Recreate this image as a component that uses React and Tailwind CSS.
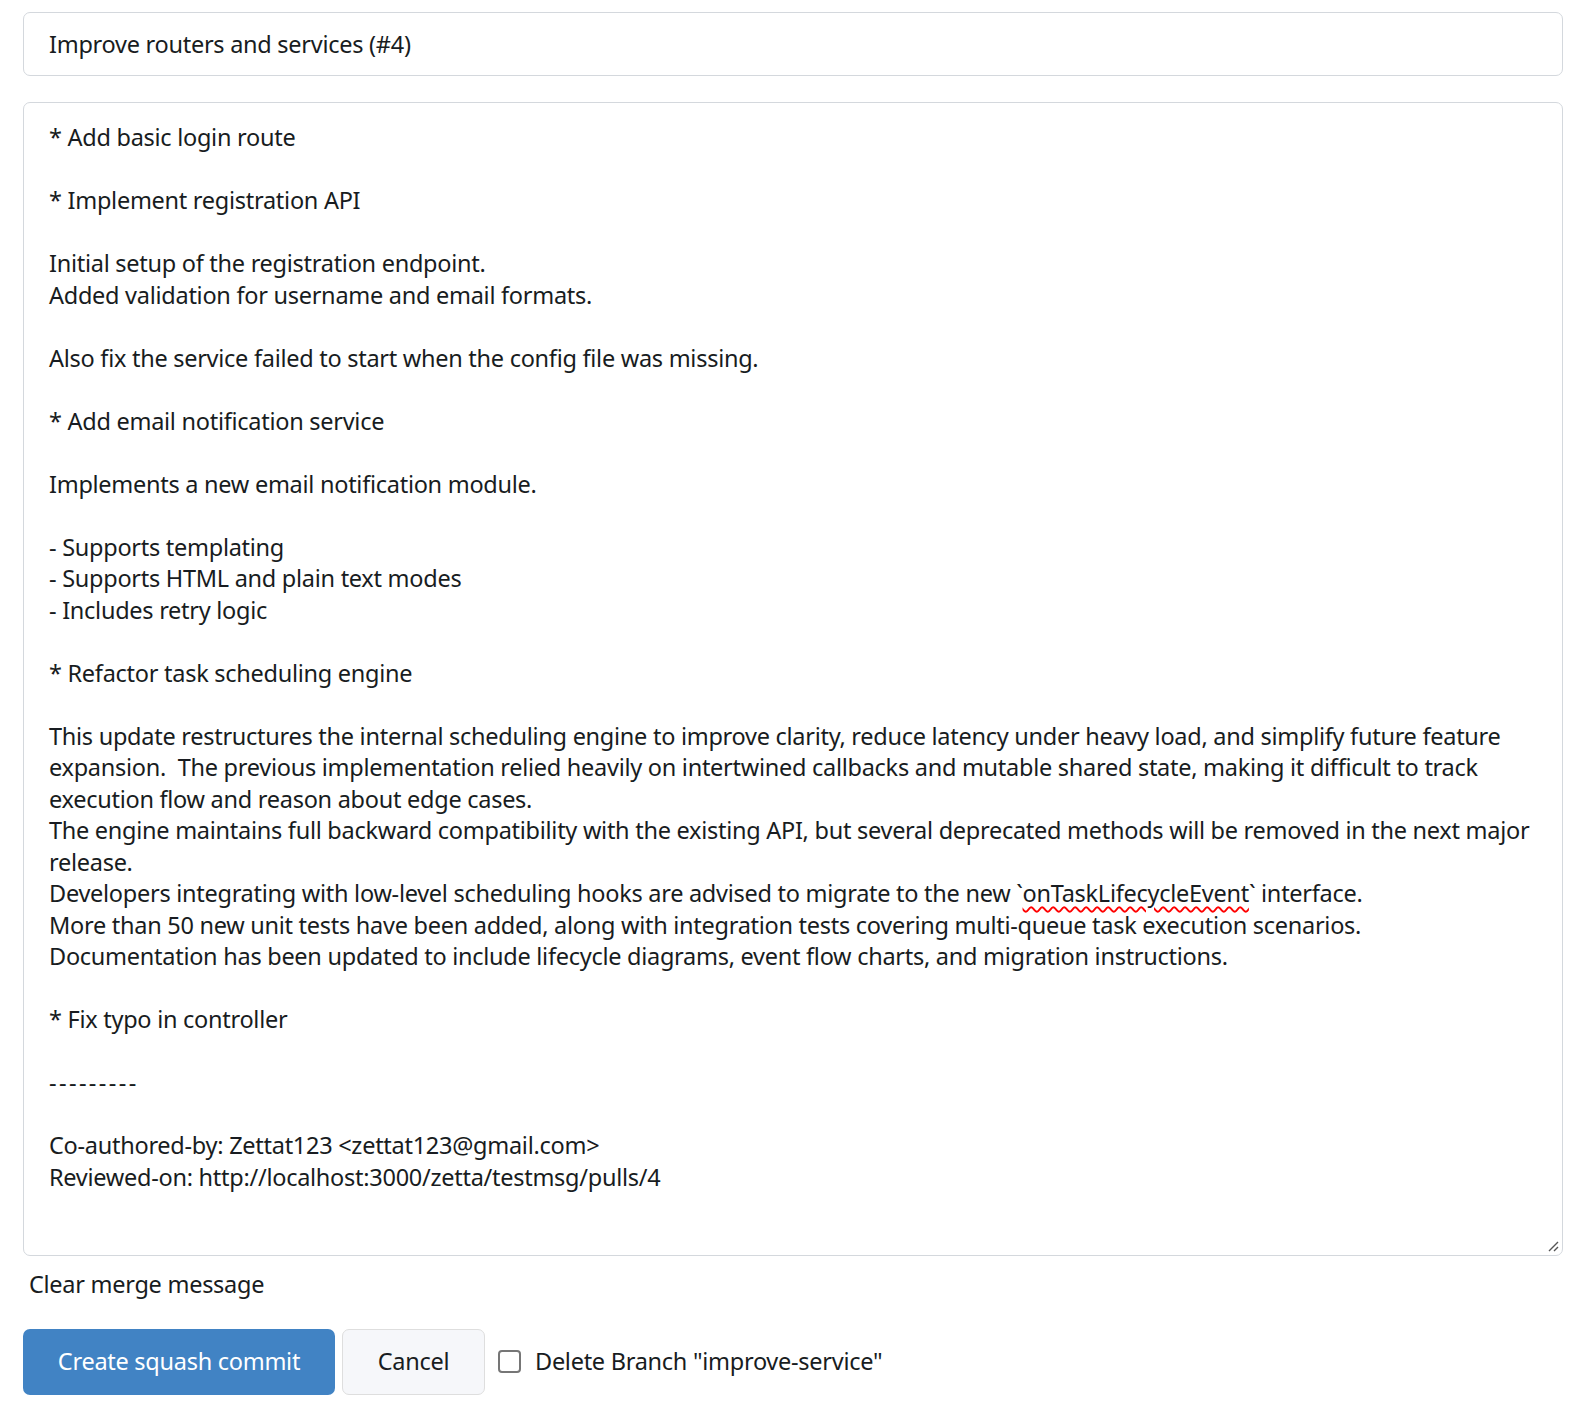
import React, { useState } from "react";

const lines = [
  "* Add basic login route",
  "",
  "* Implement registration API",
  "",
  "Initial setup of the registration endpoint.",
  "Added validation for username and email formats.",
  "",
  "Also fix the service failed to start when the config file was missing.",
  "",
  "* Add email notification service",
  "",
  "Implements a new email notification module.",
  "",
  "- Supports templating",
  "- Supports HTML and plain text modes",
  "- Includes retry logic",
  "",
  "* Refactor task scheduling engine",
  "",
  "This update restructures the internal scheduling engine to improve clarity, reduce latency under heavy load, and simplify future feature",
  "expansion.  The previous implementation relied heavily on intertwined callbacks and mutable shared state, making it difficult to track",
  "execution flow and reason about edge cases.",
  "The engine maintains full backward compatibility with the existing API, but several deprecated methods will be removed in the next major",
  "release.",
  "DEVELOPERS",
  "More than 50 new unit tests have been added, along with integration tests covering multi-queue task execution scenarios.",
  "Documentation has been updated to include lifecycle diagrams, event flow charts, and migration instructions.",
  "",
  "* Fix typo in controller",
  "",
  "DASHES",
  "",
  "Co-authored-by: Zettat123 <zettat123@gmail.com>",
  "Reviewed-on: http://localhost:3000/zetta/testmsg/pulls/4",
];

const renderLine = (line, index) => {
  if (line === "") {
    return <div key={index} className="h-[31.5px]" />;
  }
  if (line === "DEVELOPERS") {
    return (
      <div key={index} className="whitespace-pre">
        Developers integrating with low-level scheduling hooks are advised to
        migrate to the new `
        <span className="underline decoration-wavy decoration-[#ff0000] decoration-[1.5px] underline-offset-[4px]">
          onTaskLifecycleEvent
        </span>
        ` interface.
      </div>
    );
  }
  if (line === "DASHES") {
    return (
      <div key={index} className="whitespace-pre tracking-[2.4px]">
        ---------
      </div>
    );
  }
  return (
    <div key={index} className="whitespace-pre">
      {line}
    </div>
  );
};

const App = () => {
  const [deleteBranch, setDeleteBranch] = useState(false);

  return (
    <div
      className="min-h-[1402px] bg-white pt-[12px] pl-[23px] pr-[7px] text-[#181c21] text-[23.5px] tracking-[-0.27px] leading-[31.5px]"
      style={{ fontFamily: '"Segoe UI", "Noto Sans", sans-serif' }}
    >
      {/* title */}
      <div className="h-[64px] flex items-center px-[25px] pt-[1px] border border-[#d4d8dd] rounded-[7px]">
        Improve routers and services (#4)
      </div>

      {/* message */}
      <div className="relative mt-[26px] h-[1154px] px-[25px] pt-[19px] border border-[#d4d8dd] rounded-[7px] overflow-hidden">
        {lines.map(renderLine)}
        <svg
          className="absolute right-[3px] bottom-[3px]"
          width="12"
          height="12"
          viewBox="0 0 12 12"
        >
          <path d="M11 2 L2 11 M11 7 L7 11" stroke="#555" strokeWidth="1.4" />
        </svg>
      </div>

      <div className="mt-[17px] pl-[6px] h-[24px] flex items-center">
        Clear merge message
      </div>

      <div className="mt-[32px] flex items-start">
        <button className="h-[66px] w-[312px] bg-[#4183c4] text-white rounded-[7px]">
          Create squash commit
        </button>
        <button className="ml-[7px] h-[66px] w-[143px] bg-[#f6f7fa] border border-[#dedede] rounded-[7px]">
          Cancel
        </button>
        <label className="ml-[13px] mt-[17px] flex items-center gap-[14px] cursor-pointer">
          <span
            className={`w-[23px] h-[23px] rounded-[4px] border-2 ${
              deleteBranch ? "bg-[#4183c4] border-[#4183c4]" : "border-[#767676] bg-white"
            }`}
            onClick={() => setDeleteBranch(!deleteBranch)}
          />
          <span>Delete Branch "improve-service"</span>
        </label>
      </div>
    </div>
  );
};

export default App;
